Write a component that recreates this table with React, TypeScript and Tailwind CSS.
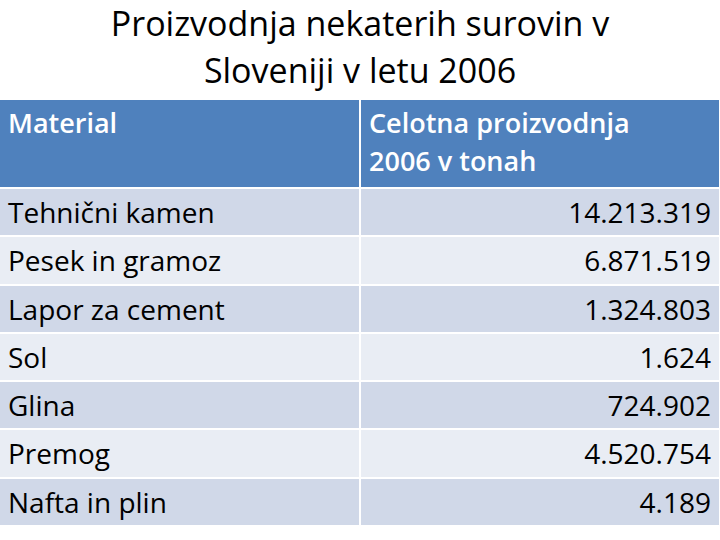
import React from "react";

const rows: [string, string][] = [
  ["Tehnični kamen", "14.213.319"],
  ["Pesek in gramoz", "6.871.519"],
  ["Lapor za cement", "1.324.803"],
  ["Sol", "1.624"],
  ["Glina", "724.902"],
  ["Premog", "4.520.754"],
  ["Nafta in plin", "4.189"],
];

export default function App() {
  return (
    <div
      className="w-[720px] h-[540px] bg-white overflow-hidden flex flex-col"
      style={{ fontFamily: "'Open Sans', Lato, sans-serif" }}
    >
      <div className="h-[100px] flex flex-col items-center pt-[0px] text-[34px] leading-[47px] text-black">
        <div>Proizvodnja nekaterih surovin v</div>
        <div>Sloveniji v letu 2006</div>
      </div>
      <div className="w-[719px] flex flex-col">
        <div className="flex h-[87px] gap-[2px]">
          <div className="w-[359px] bg-[#4f81bd] text-white font-semibold text-[27px] leading-[38px] px-[8px] pt-[4px]">
            Material
          </div>
          <div className="flex-1 bg-[#4f81bd] text-white font-semibold text-[27px] leading-[38px] px-[8px] pt-[4px]">
            <div>Celotna proizvodnja</div>
            <div>2006 v tonah</div>
          </div>
        </div>
        {rows.map(([name, val], i) => (
          <div key={name} className="flex h-[46.3px] gap-[2px] mt-[2px]">
            <div
              className={`w-[359px] ${i % 2 === 0 ? "bg-[#d0d8e8]" : "bg-[#e9edf4]"} text-black text-[28px] leading-[46px] px-[8px]`}
            >
              {name}
            </div>
            <div
              className={`flex-1 ${i % 2 === 0 ? "bg-[#d0d8e8]" : "bg-[#e9edf4]"} text-black text-[28px] leading-[46px] px-[8px] text-right`}
            >
              {val}
            </div>
          </div>
        ))}
      </div>
    </div>
  );
}
